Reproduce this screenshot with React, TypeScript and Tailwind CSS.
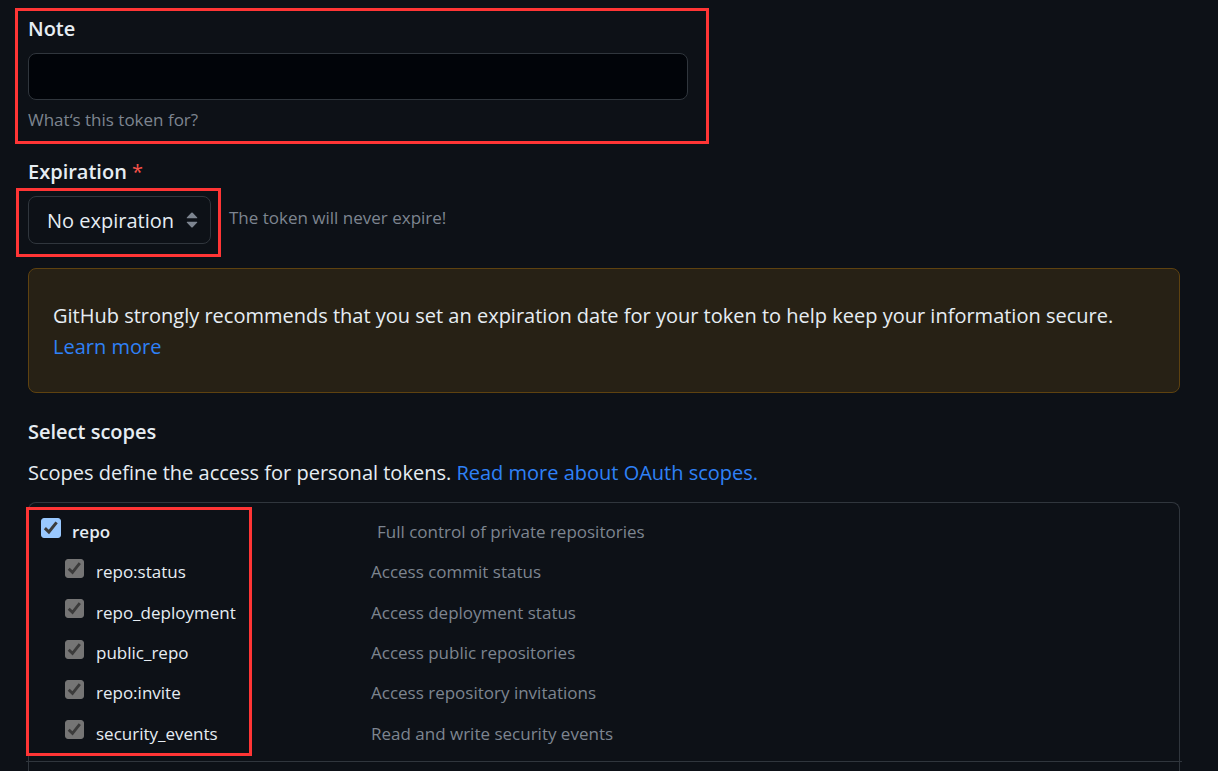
import { useId, useState } from "react";

type Scope = { name: string; description: string };

const repoScopes: Scope[] = [
  { name: "repo:status", description: "Access commit status" },
  { name: "repo_deployment", description: "Access deployment status" },
  { name: "public_repo", description: "Access public repositories" },
  { name: "repo:invite", description: "Access repository invitations" },
  { name: "security_events", description: "Read and write security events" },
];

function Highlight({ className }: { className: string }) {
  return (
    <div
      aria-hidden="true"
      className={`pointer-events-none absolute border-3 border-[#ff3535] ${className}`}
    />
  );
}

function Tick() {
  return (
    <svg
      aria-hidden="true"
      viewBox="0 0 20 20"
      className="pointer-events-none col-start-1 row-start-1 size-full"
    >
      <path
        d="M3.9 10.2 7.9 14 15.6 4.4"
        fill="none"
        stroke="#3b3b3b"
        strokeWidth="3"
      />
    </svg>
  );
}

function ScopeRow({
  scope,
  parent = false,
  checked,
  onChange,
}: {
  scope: Scope;
  parent?: boolean;
  checked: boolean;
  onChange?: (checked: boolean) => void;
}) {
  const id = useId();
  return (
    <li className={parent ? "flex items-center pl-3" : "flex items-center pl-9"}>
      <span
        className={
          parent ? "mb-2 grid size-5 shrink-0" : "mb-2 grid size-[19px] shrink-0"
        }
      >
        <input
          id={id}
          type="checkbox"
          checked={checked}
          disabled={!parent}
          onChange={(e) => onChange?.(e.target.checked)}
          className={
            parent
              ? "col-start-1 row-start-1 size-full appearance-none rounded-[3px] border border-[#8a8a8a] checked:border-[#99c8ff] checked:bg-[#99c8ff]"
              : "col-start-1 row-start-1 size-full appearance-none rounded-[3px] border border-[#757575] checked:bg-[#757575]"
          }
        />
        {checked && <Tick />}
      </span>
      <label
        htmlFor={id}
        className={
          parent
            ? "ml-[11px] w-[305px] shrink-0 font-semibold"
            : "ml-3 w-[275px] shrink-0"
        }
      >
        {scope.name}
      </label>
      <span className="text-[#7d8590]">{scope.description}</span>
    </li>
  );
}

export default function App() {
  const [note, setNote] = useState("");
  const [repo, setRepo] = useState(true);

  return (
    <main className="flex min-h-screen flex-col bg-[#0d1117] pt-[13px] pr-[38px] pl-7 font-['Open_Sans',sans-serif] text-xl text-[#e6edf3]">
      <div className="relative max-w-[660px]">
        <label htmlFor="note" className="block leading-8 font-semibold">
          Note
        </label>
        <input
          id="note"
          type="text"
          value={note}
          onChange={(e) => setNote(e.target.value)}
          aria-describedby="note-hint"
          className="mt-2 block h-[47px] w-full rounded-lg border border-[#30363d] bg-[#010409] px-4 outline-none"
        />
        <p id="note-hint" className="mt-2 text-[17px] leading-6 text-[#7d8590]">
          What‘s this token for?
        </p>
        <Highlight className="-top-[5px] -right-[21px] -bottom-3 -left-[13px]" />
      </div>

      <div className="mt-6">
        <label htmlFor="expiration" className="block leading-8 font-semibold">
          Expiration <span className="font-normal text-[#f85149]">*</span>
        </label>
        <div className="mt-2 flex items-center">
          <div className="relative">
            <select
              id="expiration"
              className="block h-12 w-[183px] appearance-none rounded-lg border border-[#30363d] bg-[#0d1117] pt-0.5 pl-[18px] outline-none"
            >
              <option>No expiration</option>
            </select>
            <svg
              aria-hidden="true"
              viewBox="0 0 12 16"
              className="pointer-events-none absolute top-4 right-[13px] h-4 w-3 fill-[#7d8590]"
            >
              <path d="M5.3.8a1 1 0 0 1 1.4 0L11.2 5.4Q11.6 6.2 10.7 6.3H1.3Q.4 6.2.8 5.4ZM5.3 15.2a1 1 0 0 0 1.4 0L11.2 10.6Q11.6 9.8 10.7 9.7H1.3Q.4 9.8.8 10.6Z" />
            </svg>
            <Highlight className="-top-2 -right-[10px] -bottom-[13px] -left-3" />
          </div>
          <span className="mb-1 ml-[18px] text-[17px] leading-6 text-[#7d8590]">
            The token will never expire!
          </span>
        </div>
      </div>

      <div className="mt-6 rounded-lg border border-[#5e4210] bg-[#272115] px-6 pt-[31px] pb-[30px] leading-[31px]">
        <p>
          GitHub strongly recommends that you set an expiration date for your
          token to help keep your information secure.{" "}
          <a href="#learn-more" className="text-[#2f81f7]">
            Learn more
          </a>
        </p>
      </div>

      <h2 className="mt-[23px] leading-8 font-semibold">Select scopes</h2>
      <p className="mt-[9px] leading-8">
        Scopes define the access for personal tokens.{" "}
        <a href="#oauth-scopes" className="text-[#2f81f7]">
          Read more about OAuth scopes.
        </a>
      </p>

      <div className="relative mt-[13px] flex-1 rounded-t-lg border border-b-0 border-[#30363d] text-[17px] leading-6">
        <div className="relative -mx-[3px] border-b border-[#30363d] px-[3px] pt-[9px] pb-[7px]">
          <ul className="grid h-[242px] grid-rows-6">
            <ScopeRow
              parent
              scope={{
                name: "repo",
                description: "Full control of private repositories",
              }}
              checked={repo}
              onChange={setRepo}
            />
            {repoScopes.map((scope) => (
              <ScopeRow key={scope.name} scope={scope} checked={repo} />
            ))}
          </ul>
          <Highlight className="top-1 bottom-[5px] left-0 w-[226px]" />
        </div>
      </div>
    </main>
  );
}
